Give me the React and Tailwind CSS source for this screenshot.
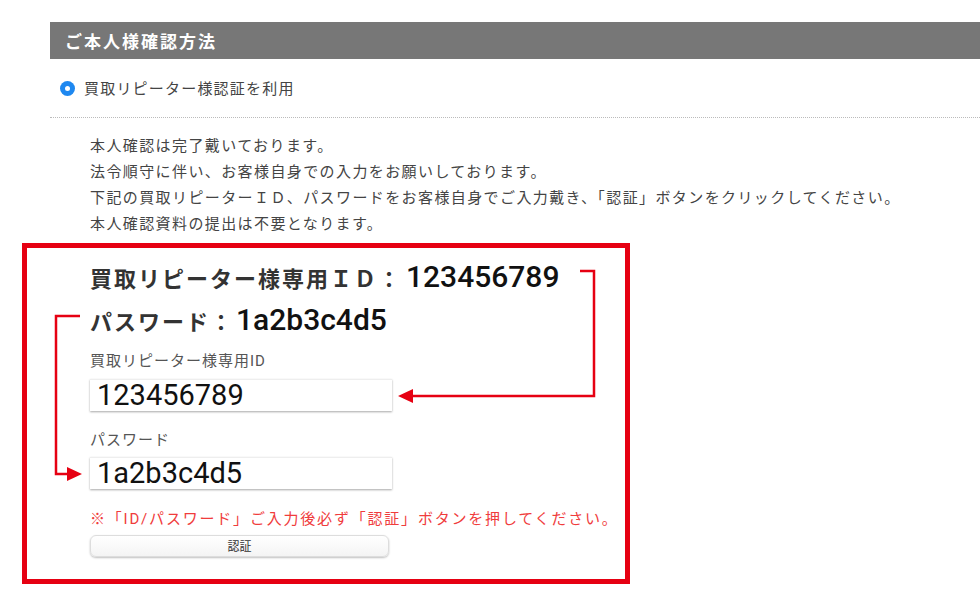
import React from "react";

const jp = { fontFamily: '"Noto Sans CJK JP", "Noto Sans", sans-serif' };
const num = { fontFamily: 'Roboto, "Noto Sans CJK JP", sans-serif' };

const Arrows = () => (
  <svg className="absolute left-0 top-0" width="980" height="605" viewBox="0 0 980 605" fill="none">
    <path d="M580 271 H594 V396 H410" stroke="#e60012" strokeWidth="2.5" />
    <path d="M398 396 L413 389 L413 403 Z" fill="#e60012" />
    <path d="M80 316 H56 V474 H70" stroke="#e60012" strokeWidth="2.5" />
    <path d="M82 474 L67 467 L67 481 Z" fill="#e60012" />
  </svg>
);

const App = () => {
  return (
    <div className="relative w-[980px] h-[605px] bg-white overflow-hidden text-[#333]" style={jp}>
      <div className="pt-[22px]">
        <div className="ml-[50px] h-[37px] bg-[#777] flex items-center pl-[15px] text-white font-bold text-[17px] tracking-[2px]">
          ご本人様確認方法
        </div>

        <div className="ml-[60px] h-[58px] flex items-center gap-[9px]">
          <span className="w-[15px] h-[15px] rounded-full bg-[#1e88f0] flex items-center justify-center">
            <span className="w-[5px] h-[5px] rounded-full bg-white" />
          </span>
          <span className="text-[15px] tracking-[1.2px] text-[#444]">買取リピーター様認証を利用</span>
        </div>

        <div className="ml-[50px] border-t border-dotted border-[#bbb]" />

        <div className="pl-[90px] pt-[14px] text-[15px] leading-[26px] tracking-[1.4px] text-[#444]">
          <p>本人確認は完了戴いております。</p>
          <p>法令順守に伴い、お客様自身での入力をお願いしております。</p>
          <p>下記の買取リピーターＩＤ、パスワードをお客様自身でご入力戴き、「認証」ボタンをクリックしてください。</p>
          <p>本人確認資料の提出は不要となります。</p>
        </div>

        <div className="ml-[22px] mt-[7px] w-[608px] h-[341px] border-[5px] border-[#e60012] pl-[63px] pt-[6px]">
          <div className="flex items-baseline h-[32px] text-[22px] font-bold tracking-[2px] text-[#333]">
            買取リピーター様専用ＩＤ：
            <span className="ml-[4px] text-[30px] font-medium tracking-normal text-[#111]" style={num}>123456789</span>
          </div>
          <div className="mt-[11px] flex items-baseline h-[32px] text-[22px] font-bold tracking-[2px] text-[#333]">
            パスワード：
            <span className="ml-[2px] text-[30px] font-medium tracking-normal text-[#111]" style={num}>1a2b3c4d5</span>
          </div>

          <div className="mt-[22px] text-[15px] leading-[20px] tracking-[1px] text-[#555]" style={num}>買取リピーター様専用ID</div>
          <div
            className="mt-[8px] w-[302px] h-[32px] bg-white border-t border-[#eee] shadow-[0_1px_2px_rgba(0,0,0,0.35)] flex items-center pl-[7px] text-[29px] text-[#111]"
            style={num}
          >
            123456789
          </div>

          <div className="mt-[18px] text-[15px] leading-[20px] tracking-[1px] text-[#555]">パスワード</div>
          <div
            className="mt-[8px] w-[302px] h-[32px] bg-white border-t border-[#eee] shadow-[0_1px_2px_rgba(0,0,0,0.35)] flex items-center pl-[7px] text-[29px] text-[#111]"
            style={num}
          >
            1a2b3c4d5
          </div>

          <div className="mt-[20px] text-[15px] leading-[20px] tracking-[1.8px] text-[#f03c3c]" style={num}>
            ※「ID/パスワード」ご入力後必ず「認証」ボタンを押してください。
          </div>
          <button className="mt-[6px] w-[299px] h-[22px] rounded-[6px] border border-[#ddd] bg-gradient-to-b from-white to-[#f4f4f4] shadow-[0_1px_2px_rgba(0,0,0,0.25)] text-[12px] text-[#333] flex items-center justify-center">
            認証
          </button>
        </div>
      </div>
      <Arrows />
    </div>
  );
};

export default App;
